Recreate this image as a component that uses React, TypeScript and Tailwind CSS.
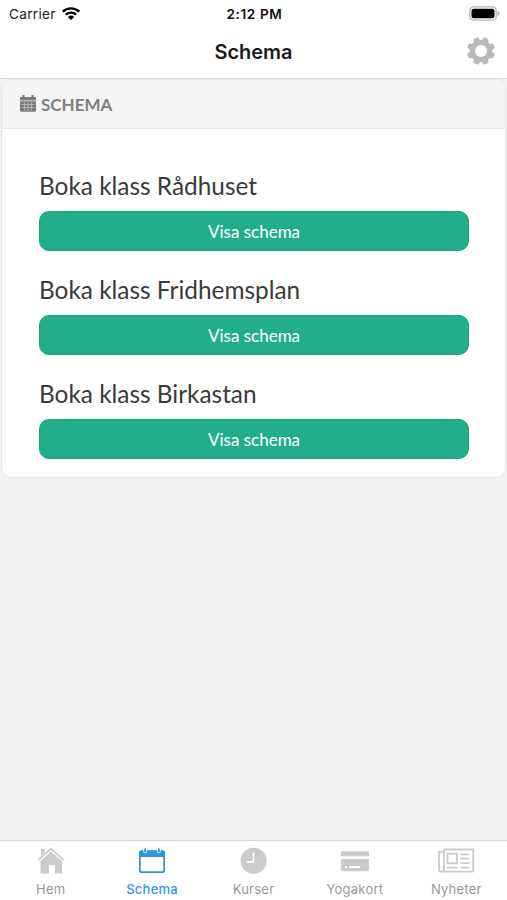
import { useState } from "react";
import type { ReactNode } from "react";

interface Tab {
    id: string;
    label: string;
    icon: ReactNode;
}

const LOCATIONS = ["Rådhuset", "Fridhemsplan", "Birkastan"];

const HomeIcon = () => (
    <svg className="h-[27px] w-[28px]" viewBox="0 0 28 27" fill="currentColor">
        <path d="M4 2h4v3.2L4 9z" />
        <path d="M14 4.5 25 14v12.5h-7.2V18h-6v8.5H3.5V14z" />
        <path d="M1 14.4 14 2.4l13 12" fill="none" stroke="#fff" strokeWidth="2.4" />
        <path d="M1.2 13.2 14 1.6l12.8 11.6" fill="none" stroke="currentColor" strokeWidth="1.8" />
    </svg>
);

const CalendarIcon = () => (
    <svg className="h-[27px] w-[28px]" viewBox="0 0 28 27" fill="none">
        <rect x="1.9" y="4" width="24.2" height="21.2" rx="2" stroke="currentColor" strokeWidth="1.7" />
        <path d="M1 10V5.5C1 4.2 1.9 3.5 3.3 3.5h21.4c1.4 0 2.3.7 2.3 2V10z" fill="currentColor" />
        <path d="M7.2 2.5v2M20.8 2.5v2" stroke="#fff" strokeWidth="3.6" strokeLinecap="round" />
        <path d="M7.2 2.3v2.2M20.8 2.3v2.2" stroke="currentColor" strokeWidth="2" strokeLinecap="round" />
    </svg>
);

const ClockIcon = () => (
    <svg className="h-[27px] w-[28px]" viewBox="0 0 28 27" fill="none">
        <circle cx="14.6" cy="13.7" r="13" fill="currentColor" />
        <path d="M14.5 5.5v9.4H7.5" stroke="#fff" strokeWidth="1.6" />
    </svg>
);

const CardIcon = () => (
    <svg className="h-[27px] w-[28px]" viewBox="0 0 28 27" fill="none">
        <path d="M0 9.3V5.8C0 4.8.7 4.3 1.5 4.3h25c.8 0 1.5.5 1.5 1.5v3.5z" fill="currentColor" />
        <path d="M0 12h28v10.8c0 1-.7 1.5-1.5 1.5h-25C.7 24.3 0 23.8 0 22.8z" fill="currentColor" />
        <path d="M4 20h2M8 20h11" stroke="#fff" strokeWidth="1.8" />
    </svg>
);

const NewsIcon = () => (
    <svg className="h-[27px] w-[38px]" viewBox="0 0 38 27" fill="none" stroke="currentColor" strokeWidth="1.8">
        <path d="M7 2.5h29.2v20.7a1.5 1.5 0 0 1-1.5 1.5H4.5a2.5 2.5 0 0 1-2.5-2.5V4.8h4" />
        <path d="M7 2.5v20q0 2-1.8 2" />
        <rect x="10.5" y="6.8" width="9.5" height="9.5" />
        <path d="M23.5 7.4h9M23.5 11.6h9M23.5 16.2h9M10 20.6h10.5M23.5 20.6h9" />
    </svg>
);

const TABS: Tab[] = [
    { id: "home", label: "Hem", icon: <HomeIcon /> },
    { id: "schedule", label: "Schema", icon: <CalendarIcon /> },
    { id: "courses", label: "Kurser", icon: <ClockIcon /> },
    { id: "cards", label: "Yogakort", icon: <CardIcon /> },
    { id: "news", label: "Nyheter", icon: <NewsIcon /> },
];

const GearIcon = () => (
    <svg className="h-7 w-7" viewBox="-14 -14 28 28">
        <g fill="#b9b9b9">
            {[22.5, 67.5, 112.5, 157.5].map((angle) => (
                <rect key={angle} x="-3" y="-14" width="6" height="28" rx="2" transform={`rotate(${angle})`} />
            ))}
            <circle r="11.3" />
        </g>
        <circle r="6" fill="#fff" />
    </svg>
);

const SmallCalendarIcon = () => (
    <svg className="mb-0.5 h-[17px] w-4" viewBox="0 0 16 17">
        <path d="M0 2h16v3.4H0zM0 6.3h16V15.5c0 .8-.4 1.2-1.2 1.2H1.2C.4 16.7 0 16.3 0 15.5z" fill="#7c7c7c" />
        <path d="M3.5 0v3M12.5 0v3" stroke="#7c7c7c" strokeWidth="2" />
        <path d="M1.5 9.5h13M1.5 12.5h13M4.5 7.5v8M8 7.5v8M11.5 7.5v8" stroke="#c8c8c8" strokeWidth=".7" />
    </svg>
);

export default function App() {
    const [activeTab, setActiveTab] = useState("schedule");

    return (
        <div className="flex h-[900px] w-full flex-col overflow-hidden bg-[#f2f2f2] font-['Inter',sans-serif]">
            {/* Status bar */}
            <div className="grid h-[26px] grid-cols-[1fr_auto_1fr] items-center bg-white pr-[7px] pl-[9px] text-[13.6px] text-[#222]">
                <div className="flex items-center gap-1.5 pt-0.5">
                    <span className="tracking-[0.3px]">Carrier</span>
                    <svg className="h-[14px] w-[18px]" viewBox="0 0 18 14" fill="none" stroke="#000" strokeWidth="2.3">
                        <path d="M.8 4.7a11.6 11.6 0 0 1 16.4 0M3.8 7.8a7.4 7.4 0 0 1 10.4 0" />
                        <path d="M9 13 5.9 9.9a4.4 4.4 0 0 1 6.2 0z" fill="#000" stroke="none" />
                    </svg>
                </div>
                <span className="pt-0.5 text-center font-semibold tracking-[0.6px] text-[#111]">2:12 PM</span>
                <svg className="h-[15px] w-[31px] justify-self-end" viewBox="0 0 31 15">
                    <rect x=".8" y=".8" width="26.4" height="13.4" rx="4" fill="#fff" stroke="#b5b5b5" strokeWidth="1.3" />
                    <rect x="2.5" y="2.8" width="23" height="9.4" rx="2.2" fill="#000" />
                    <path d="M28.6 5q2 .7 2 2.5t-2 2.5z" fill="#b0b0b0" />
                </svg>
            </div>

            {/* Navigation bar */}
            <header className="grid h-[53px] grid-cols-[1fr_auto_1fr] items-center border-b border-[#dcdcdc] bg-white px-3">
                <h1 className="col-start-2 text-[20px] font-semibold text-[#1c1c1c]">Schema</h1>
                <button className="mb-[3px] justify-self-end" aria-label="Inställningar">
                    <GearIcon />
                </button>
            </header>

            {/* Content */}
            <main className="flex-1 px-px font-['Lato',sans-serif]">
                <section className="h-[399px] overflow-hidden rounded-[10px] border border-[#e6e6e6] bg-white">
                    <div className="flex h-[49px] items-center gap-[5px] border-b border-[#e8e8e8] bg-[#f4f4f4] pl-[18px]">
                        <SmallCalendarIcon />
                        <h2 className="pt-0.5 text-[17px] font-bold text-[#808080]">SCHEMA</h2>
                    </div>
                    <div className="flex flex-col gap-6 pt-[42px] pr-9 pl-[37px]">
                        {LOCATIONS.map((location) => (
                            <div key={location} className="flex flex-col gap-[11px]">
                                <h3 className="h-[29px] text-[24.4px] leading-[29px] text-[#3a3a3a]">Boka klass {location}</h3>
                                <button className="h-10 rounded-[10px] border border-[#1fa27f] bg-[#23ae8a] pt-px text-[17px] text-white">
                                    Visa schema
                                </button>
                            </div>
                        ))}
                    </div>
                </section>
            </main>

            {/* Tab bar */}
            <nav className="grid h-[60px] grid-cols-5 border-t border-[#d5d5d5] bg-white">
                {TABS.map((tab) => (
                    <button
                        key={tab.id}
                        onClick={() => setActiveTab(tab.id)}
                        className={`flex flex-col items-center pt-1.5 ${activeTab === tab.id ? "text-[#2f93dc]" : "text-[#cbcbcb]"}`}
                    >
                        {tab.icon}
                        <span
                            className={`mt-[5px] text-[13px] leading-5 tracking-[0.25px] ${activeTab === tab.id ? "font-medium text-[#3393f2]" : "text-[#999]"}`}
                        >
                            {tab.label}
                        </span>
                    </button>
                ))}
            </nav>
        </div>
    );
}
